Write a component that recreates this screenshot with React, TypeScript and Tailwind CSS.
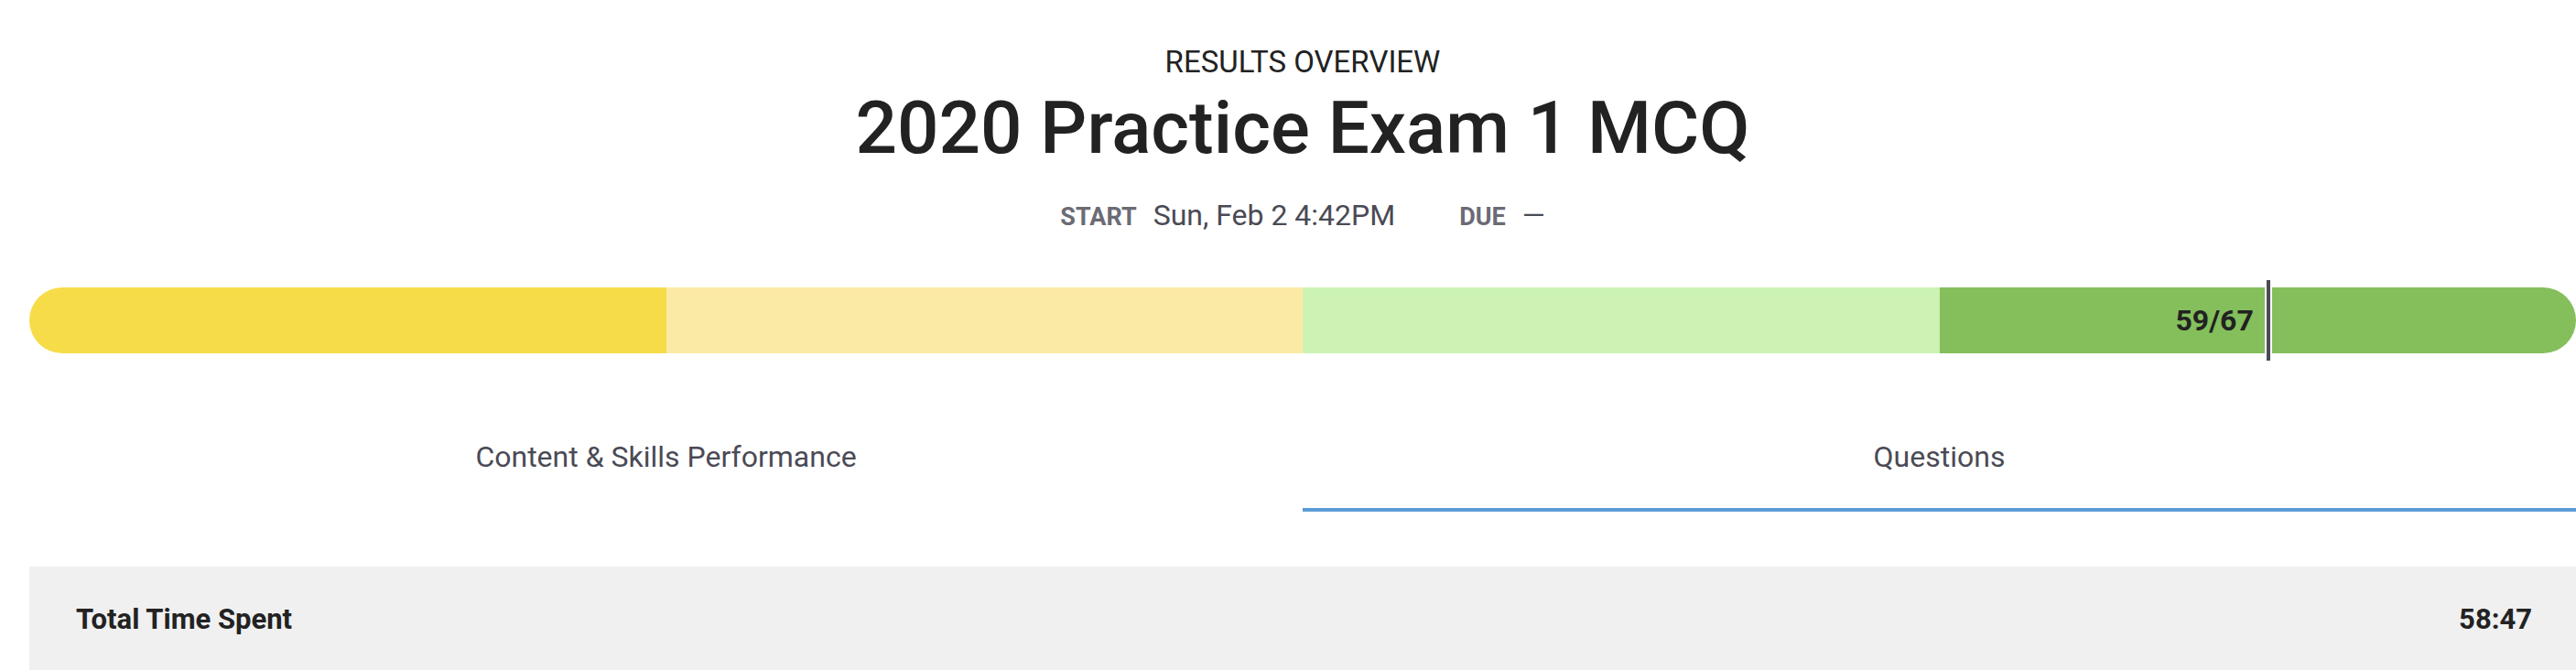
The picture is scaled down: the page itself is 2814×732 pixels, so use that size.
import { useState } from 'react';

// score bar quarters, left to right
const SEGMENTS = ['bg-[#f7dc4a]', 'bg-[#fbeaa6]', 'bg-[#ccf3b3]', 'bg-[#84bf5c]'];

const TABS = ['Content & Skills Performance', 'Questions'];

export default function App() {
  const [tab, setTab] = useState(1);
  const score = 59;
  const total = 67;
  const pct = (score / total) * 100;

  return (
    <div className="min-h-screen bg-white pl-[32px] font-['Roboto','Liberation_Sans',sans-serif] text-[#222]">
      {/* Header */}
      <header className="flex flex-col items-center pt-[50px]">
        <div className="text-[33px] leading-[36px] uppercase">Results Overview</div>
        <h1 className="mt-[6px] text-[80px] leading-[96px] font-medium">2020 Practice Exam 1 MCQ</h1>
        <div className="mt-[27px] flex items-baseline text-[32px] leading-[40px] text-[#4a4a55]">
          <span className="mr-[18px] text-[27px] font-bold text-[#6b6b75]">START</span>
          <span>Sun, Feb 2 4:42PM</span>
          <span className="ml-[70px] mr-[18px] text-[27px] font-bold text-[#6b6b75]">DUE</span>
          <span>—</span>
        </div>
      </header>

      {/* Score bar */}
      <div className="relative mt-[57px]">
        <div className="flex h-[72px] overflow-hidden rounded-full">
          {SEGMENTS.map((bg) => (
            <div key={bg} className={`flex-1 ${bg}`} />
          ))}
        </div>
        <div
          className="absolute inset-y-0 left-0 flex items-center justify-end pr-[12px] text-[32px] font-bold text-[#222]"
          style={{ width: `calc(${pct}% - 8px)` }}
        >
          {score}/{total}
        </div>
        <div
          className="absolute top-[-8px] h-[88px] w-[8px] border-x-2 border-white bg-[#4b4b55]"
          style={{ left: `calc(${pct}% - 8px)` }}
        />
      </div>

      {/* Tabs */}
      <div className="mt-[53px] grid grid-cols-2">
        {TABS.map((label, i) => (
          <button
            key={label}
            onClick={() => setTab(i)}
            className={
              i === tab
                ? 'border-b-4 border-[#5b9bd5] pt-[40px] pb-[36px] text-center text-[32px] leading-[40px] text-[#4a4a55]'
                : 'border-b-4 border-transparent pt-[40px] pb-[36px] text-center text-[32px] leading-[40px] text-[#4a4a55]'
            }
          >
            {label}
          </button>
        ))}
      </div>

      {/* Totals */}
      <div className="mt-[60px] flex justify-between bg-[#f0f0f0] py-[40px] pl-[51px] pr-[48px] text-[31px] leading-[36px] font-bold">
        <span>Total Time Spent</span>
        <span>58:47</span>
      </div>
    </div>
  );
}
